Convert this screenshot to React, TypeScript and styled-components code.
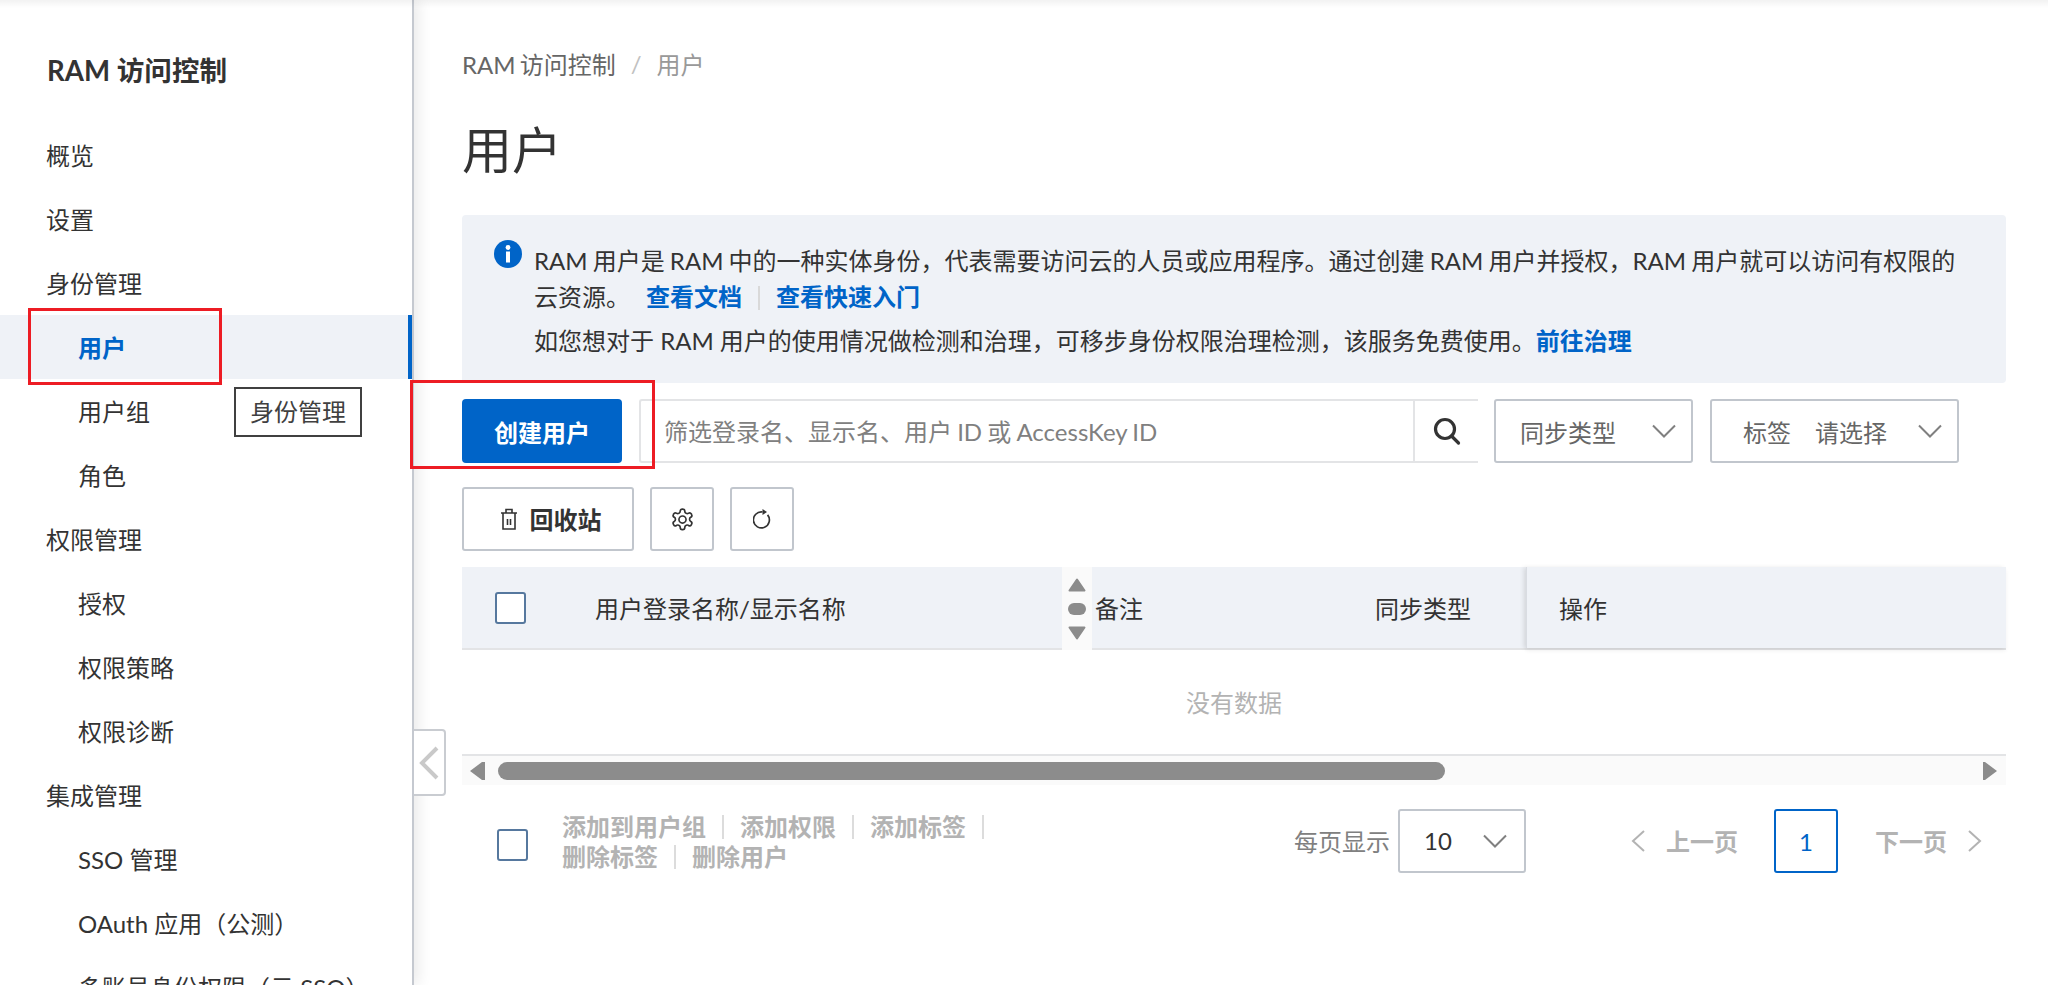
import React from "react";
import styled, { createGlobalStyle } from "styled-components";

const FONT = `Lato, "Noto Sans CJK SC", sans-serif`;

const Global = createGlobalStyle`
  html, body { margin: 0; padding: 0; height: 100%; overflow: hidden; background: #fff; }
  body { font-family: ${FONT}; color: #333; font-size: 24px; }
  #root { height: 100%; }
  * { box-sizing: border-box; }
`;

const Page = styled.div`
  position: relative;
  display: flex;
  width: 2048px;
  height: 985px;
  overflow: hidden;
  &::before {
    content: "";
    position: absolute;
    left: 0; right: 0; top: 0;
    height: 8px;
    background: linear-gradient(rgba(0,0,0,.05), rgba(0,0,0,0));
    z-index: 3;
  }
`;

const Sidebar = styled.aside`
  position: relative;
  z-index: 2;
  flex: 0 0 414px;
  height: 985px;
  background: #fff;
  border-right: 2px solid #c5c9d0;
  box-shadow: 4px 0 14px rgba(0,0,0,.09);
  padding-top: 50px;
  overflow: hidden;
`;

const SideTitle = styled.div`
  padding-left: 47px;
  height: 42px;
  line-height: 42px;
  font-size: 27.6px;
  font-weight: 700;
  color: #333;
  margin-bottom: 31px;
`;

const MenuItem = styled.div<{ $sub?: boolean; $active?: boolean }>`
  position: relative;
  height: 64px;
  line-height: 66px;
  padding-left: ${(p) => (p.$sub ? 78 : 46)}px;
  font-size: 24px;
  white-space: nowrap;
  color: ${(p) => (p.$active ? "#0064c8" : "#333")};
  font-weight: ${(p) => (p.$active ? 700 : 400)};
  background: ${(p) => (p.$active ? "#eff2f7" : "transparent")};
  border-right: ${(p) => (p.$active ? "4px solid #0064c8" : "none")};
`;

const CollapseTab = styled.div`
  position: absolute;
  left: 414px;
  top: 729px;
  width: 32px;
  height: 67px;
  background: #fff;
  border: 2px solid #c9ccd1;
  border-left: none;
  border-radius: 0 4px 4px 0;
  display: flex;
  align-items: center;
  justify-content: center;
  z-index: 3;
`;

const Main = styled.main`
  flex: 1;
  min-width: 0;
  padding: 48px 42px 0 48px;
`;

const Crumbs = styled.div`
  display: flex;
  align-items: center;
  height: 34px;
  margin-top: -2px;
  font-size: 24px;
  color: #666;
  word-spacing: -2px;
`;
const CrumbSep = styled.span`
  margin: 0 15px;
  color: #c1c1c1;
`;
const CrumbLast = styled.span`
  color: #999;
`;

const H1 = styled.h1`
  margin: 37px 0 0;
  height: 68px;
  line-height: 66px;
  font-size: 50px;
  font-weight: 400;
  color: #333;
`;

const Notice = styled.div`
  margin-top: 30px;
  height: 168px;
  background: #eff2f7;
  border-radius: 4px;
  padding: 28px 14px 0 32px;
  display: flex;
  gap: 12px;
`;
const InfoIcon = styled.svg`
  flex: 0 0 28px;
  width: 28px;
  height: 28px;
  margin-top: -3px;
`;
const NoticeBody = styled.div`
  flex: 1;
  min-width: 0;
  font-size: 24px;
  line-height: 36px;
  color: #333;
`;
const NoticeLine = styled.div<{ $gap?: number; $ws?: number }>`
  margin-top: ${(p) => p.$gap ?? 0}px;
  word-spacing: ${(p) => p.$ws ?? 0}px;
  white-space: nowrap;
`;
const InfoLink = styled.a<{ $ml?: number }>`
  margin-left: ${(p) => p.$ml ?? 0}px;
  color: #0064c8;
  font-weight: 700;
`;
const LinkDivider = styled.span`
  display: inline-block;
  width: 2px;
  height: 24px;
  background: #d9d9d9;
  margin: 0 16px;
  vertical-align: -4px;
`;

const Toolbar = styled.div`
  display: flex;
  margin-top: 16px;
  height: 64px;
`;
const PrimaryButton = styled.button`
  flex: 0 0 160px;
  height: 64px;
  border: none;
  border-radius: 4px;
  background: #0064c8;
  color: #fff;
  font: 700 24px ${FONT};
`;
const SearchBox = styled.div`
  margin-left: 17px;
  width: 839px;
  height: 64px;
  display: flex;
  border: 2px solid #e3e4e6;
  border-right: none;
  border-radius: 3px 0 0 3px;
`;
const SearchText = styled.div`
  flex: 1;
  padding-left: 23px;
  line-height: 62px;
  font-size: 24px;
  word-spacing: -1px;
  color: #808080;
  white-space: nowrap;
`;
const SearchBtn = styled.div`
  flex: 0 0 65px;
  border-left: 2px solid #e3e4e6;
  display: flex;
  align-items: center;
  justify-content: center;
`;
const SelectBox = styled.div<{ $w: number; $ml: number }>`
  margin-left: ${(p) => p.$ml}px;
  flex: 0 0 ${(p) => p.$w}px;
  height: 64px;
  border: 2px solid #c1c6cd;
  border-radius: 3px;
  display: flex;
  align-items: center;
  justify-content: space-between;
  color: #666;
  font-size: 24px;
  white-space: nowrap;
`;
const SelectLabel = styled.span<{ $pl: number }>`
  padding-left: ${(p) => p.$pl}px;
`;
const SelectLabelGap = styled.span`
  margin-left: 24px;
`;
const Chevron = styled.svg<{ $mr: number }>`
  margin-right: ${(p) => p.$mr}px;
  flex: none;
`;

const ActionRow = styled.div`
  display: flex;
  gap: 16px;
  margin-top: 24px;
  height: 64px;
`;
const GhostButton = styled.button<{ $w: number; $pl?: number }>`
  flex: 0 0 ${(p) => p.$w}px;
  height: 64px;
  padding: 0 0 0 ${(p) => p.$pl ?? 0}px;
  background: #fff;
  border: 2px solid #c1c6cd;
  border-radius: 3px;
  display: flex;
  align-items: center;
  justify-content: center;
  gap: 13px;
  color: #333;
  font: 700 24px ${FONT};
`;
const GhostText = styled.span`
  margin-top: -2px;
`;

const TableWrap = styled.div`
  margin-top: 16px;
`;
const HeadRow = styled.div`
  position: relative;
  display: flex;
  align-items: stretch;
  height: 83px;
  background: #eff2f7;
  border-bottom: 2px solid #e3e4e6;
  font-size: 24px;
  color: #333;
`;
const CheckCell = styled.div`
  flex: 0 0 133px;
  padding-left: 33px;
  display: flex;
  align-items: center;
`;
const CheckBox = styled.span`
  display: block;
  width: 31px;
  height: 32px;
  background: #fff;
  border: 2px solid #56789e;
  border-radius: 3px;
`;
const NameCell = styled.div`
  flex: 0 0 467px;
  line-height: 84px;
`;
const SortCell = styled.div`
  flex: 0 0 30px;
  margin-bottom: -2px;
  background: #fafafa;
  display: flex;
  flex-direction: column;
  align-items: center;
  justify-content: center;
  gap: 11px;
`;
const RemarkCell = styled.div`
  flex: 0 0 283px;
  padding-left: 3px;
  line-height: 84px;
`;
const SyncCell = styled.div`
  flex: 0 0 151px;
  line-height: 84px;
`;
const OpsCell = styled.div`
  flex: 1;
  padding-left: 32px;
  line-height: 84px;
  border-left: 1px solid #d9dce2;
  box-shadow: -3px 0 4px rgba(0,0,0,.08), 0 3px 4px rgba(0,0,0,.05);
`;
const Empty = styled.div`
  height: 104px;
  line-height: 106px;
  text-align: center;
  font-size: 24px;
  color: #b3b3b3;
`;
const ScrollBar = styled.div`
  height: 31px;
  background: #fafafa;
  border-top: 2px solid #e3e4e6;
  display: flex;
  align-items: center;
  padding: 0 9px 0 8px;
`;
const ScrollThumb = styled.div`
  margin-left: 13px;
  width: 947px;
  height: 18px;
  border-radius: 9px;
  background: #8c8c8c;
`;
const ScrollSpacer = styled.div`
  flex: 1;
`;

const Footer = styled.div`
  display: flex;
  align-items: center;
  margin-top: 24px;
  height: 63px;
`;
const FooterCheck = styled(CheckBox)`
  margin-left: 35px;
  width: 31px;
  margin-top: 8px;
`;
const BatchLinks = styled.div`
  margin-left: 34px;
  width: 460px;
  margin-top: 2px;
  font-size: 24px;
  font-weight: 700;
  color: #b3b3b3;
  line-height: 30px;
`;
const BatchLine = styled.div`
  display: flex;
  align-items: center;
  white-space: nowrap;
`;
const BatchDivider = styled.span`
  width: 2px;
  height: 24px;
  margin: 0 16px;
  background: #dcdcdc;
`;
const Pager = styled.div`
  margin-left: auto;
  display: flex;
  align-items: center;
  height: 63px;
  margin-right: 24px;
`;
const PerPage = styled.span`
  color: #808080;
  font-size: 24px;
  margin-right: 8px;
  white-space: nowrap;
`;
const PageNav = styled.span`
  display: flex;
  align-items: center;
  gap: 21px;
  color: #b3b3b3;
  font-size: 24px;
  font-weight: 700;
  white-space: nowrap;
`;
const PrevNav = styled(PageNav)`
  margin-left: 105px;
`;
const NextNav = styled(PageNav)`
  margin-left: 37px;
`;
const PageNum = styled.span`
  margin-left: 36px;
  width: 64px;
  height: 64px;
  line-height: 62px;
  text-align: center;
  border: 2px solid #0064c8;
  border-radius: 3px;
  color: #0064c8;
  font-size: 24px;
`;
const SelectValue = styled.span`
  padding-left: 24px;
  color: #333;
`;

const Annotation = styled.div<{ $x: number; $y: number; $w: number; $h: number }>`
  position: absolute;
  left: ${(p) => p.$x}px;
  top: ${(p) => p.$y}px;
  width: ${(p) => p.$w}px;
  height: ${(p) => p.$h}px;
  border: 3px solid #ed1c24;
  z-index: 5;
`;
const TagNote = styled.div`
  position: absolute;
  left: 234px;
  top: 387px;
  width: 128px;
  height: 50px;
  background: #fff;
  border: 2px solid #404040;
  font-size: 24px;
  line-height: 46px;
  padding-left: 14px;
  color: #404040;
  z-index: 5;
  white-space: nowrap;
`;

const ChevronDown = ({ mr, w = 24 }: { mr: number; w?: number }) => (
  <Chevron $mr={mr} width={w} height="14" viewBox="0 0 24 14" fill="none" stroke="#808080" strokeWidth="2">
    <path d="M1 1.5l11 11 11-11" />
  </Chevron>
);

const ThinChevron = ({ left }: { left?: boolean }) => (
  <svg width="14" height="22" viewBox="0 0 14 22" fill="none" stroke="#b3b3b3" strokeWidth="2">
    <path d={left ? "M13 1L2 11l11 10" : "M1 1l11 10L1 21"} />
  </svg>
);

const menu: { t: string; sub?: boolean; active?: boolean }[] = [
  { t: "概览" },
  { t: "设置" },
  { t: "身份管理" },
  { t: "用户", sub: true, active: true },
  { t: "用户组", sub: true },
  { t: "角色", sub: true },
  { t: "权限管理" },
  { t: "授权", sub: true },
  { t: "权限策略", sub: true },
  { t: "权限诊断", sub: true },
  { t: "集成管理" },
  { t: "SSO 管理", sub: true },
  { t: "OAuth 应用（公测）", sub: true },
  { t: "多账号身份权限（云 SSO）", sub: true },
];

export default function App() {
  return (
    <Page>
      <Global />
      <Sidebar>
        <SideTitle>RAM 访问控制</SideTitle>
        {menu.map((m) => (
          <MenuItem key={m.t} $sub={m.sub} $active={m.active}>
            {m.t}
          </MenuItem>
        ))}
      </Sidebar>
      <CollapseTab>
        <svg width="20" height="34" viewBox="0 0 20 34" fill="none" stroke="#c9c9c9" strokeWidth="4">
          <path d="M18 2L3 17l15 15" />
        </svg>
      </CollapseTab>
      <Main>
        <Crumbs>
          RAM 访问控制<CrumbSep>/</CrumbSep>
          <CrumbLast>用户</CrumbLast>
        </Crumbs>
        <H1>用户</H1>
        <Notice>
          <InfoIcon viewBox="0 0 28 28">
            <circle cx="14" cy="14" r="14" fill="#0064c8" />
            <circle cx="14" cy="7.5" r="2.4" fill="#fff" />
            <rect x="12" y="11.5" width="4" height="11" fill="#fff" />
          </InfoIcon>
          <NoticeBody>
            <NoticeLine $ws={-1}>
              RAM 用户是 RAM 中的一种实体身份，代表需要访问云的人员或应用程序。通过创建 RAM 用户并授权，RAM 用户就可以访问有权限的
            </NoticeLine>
            <NoticeLine>
              云资源。
              <InfoLink $ml={16}>查看文档</InfoLink>
              <LinkDivider />
              <InfoLink>查看快速入门</InfoLink>
            </NoticeLine>
            <NoticeLine $gap={8}>
              如您想对于 RAM 用户的使用情况做检测和治理，可移步身份权限治理检测，该服务免费使用。
              <InfoLink>前往治理</InfoLink>
            </NoticeLine>
          </NoticeBody>
        </Notice>
        <Toolbar>
          <PrimaryButton>创建用户</PrimaryButton>
          <SearchBox>
            <SearchText>筛选登录名、显示名、用户 ID 或 AccessKey ID</SearchText>
            <SearchBtn>
              <svg width="30" height="30" viewBox="0 0 30 30" fill="none" stroke="#333" strokeWidth="3.2">
                <circle cx="13" cy="13" r="9.5" />
                <path d="M19.5 20l7 7" strokeLinecap="round" />
              </svg>
            </SearchBtn>
          </SearchBox>
          <SelectBox $w={199} $ml={16}>
            <SelectLabel $pl={24}>同步类型</SelectLabel>
            <ChevronDown mr={15} />
          </SelectBox>
          <SelectBox $w={249} $ml={17}>
            <SelectLabel $pl={31}>
              标签<SelectLabelGap>请选择</SelectLabelGap>
            </SelectLabel>
            <ChevronDown mr={15} />
          </SelectBox>
        </Toolbar>
        <ActionRow>
          <GhostButton $w={172} $pl={6}>
            <svg width="16" height="22" viewBox="0 0 16 22" fill="none" stroke="#333" strokeWidth="1.6">
              <path d="M0 5h16M5 5V1.5h6V5M2 5v16h12V5M6.5 11v6M9.5 11v6" />
            </svg>
            <GhostText>回收站</GhostText>
          </GhostButton>
          <GhostButton $w={64}>
            <svg width="25" height="25" viewBox="0 0 24 24" fill="none" stroke="#333" strokeWidth="1.6" strokeLinejoin="round">
              <path d="M12.2 2h-.4a2 2 0 0 0-2 2v.2a2 2 0 0 1-1 1.7l-.4.2a2 2 0 0 1-2 0l-.2-.1a2 2 0 0 0-2.7.7l-.2.4a2 2 0 0 0 .7 2.7l.2.1a2 2 0 0 1 1 1.7v.5a2 2 0 0 1-1 1.7l-.2.1a2 2 0 0 0-.7 2.7l.2.4a2 2 0 0 0 2.7.7l.2-.1a2 2 0 0 1 2 0l.4.2a2 2 0 0 1 1 1.7v.2a2 2 0 0 0 2 2h.4a2 2 0 0 0 2-2v-.2a2 2 0 0 1 1-1.7l.4-.2a2 2 0 0 1 2 0l.2.1a2 2 0 0 0 2.7-.7l.2-.4a2 2 0 0 0-.7-2.7l-.2-.1a2 2 0 0 1-1-1.7v-.5a2 2 0 0 1 1-1.7l.2-.1a2 2 0 0 0 .7-2.7l-.2-.4a2 2 0 0 0-2.7-.7l-.2.1a2 2 0 0 1-2 0l-.4-.2a2 2 0 0 1-1-1.7V4a2 2 0 0 0-2-2z" />
              <circle cx="12" cy="12" r="3.4" />
            </svg>
          </GhostButton>
          <GhostButton $w={64}>
            <svg width="18" height="20" viewBox="0 0 18 20" fill="none" stroke="#333" strokeWidth="1.7">
              <path d="M14.6 5.9A8 8 0 1 1 9.5 3" />
              <path d="M9.5 0l4.5 3-4.5 3z" fill="#333" stroke="none" />
            </svg>
          </GhostButton>
        </ActionRow>
        <TableWrap>
          <HeadRow>
            <CheckCell>
              <CheckBox />
            </CheckCell>
            <NameCell>用户登录名称/显示名称</NameCell>
            <SortCell>
              <svg width="18" height="14" viewBox="0 0 18 14" fill="#8c8c8c" stroke="#8c8c8c" strokeWidth="2" strokeLinejoin="round">
                <path d="M9 1.5l7.5 11h-15z" />
              </svg>
              <svg width="18" height="12" viewBox="0 0 18 12" fill="#8c8c8c">
                <rect width="18" height="12" rx="6" />
              </svg>
              <svg width="18" height="14" viewBox="0 0 18 14" fill="#8c8c8c" stroke="#8c8c8c" strokeWidth="2" strokeLinejoin="round">
                <path d="M9 12.5l7.5-11h-15z" />
              </svg>
            </SortCell>
            <RemarkCell>备注</RemarkCell>
            <SyncCell>同步类型</SyncCell>
            <OpsCell>操作</OpsCell>
          </HeadRow>
          <Empty>没有数据</Empty>
          <ScrollBar>
            <svg width="15" height="18" viewBox="0 0 15 18" fill="#8c8c8c">
              <path d="M15 0v18h-3L0 9l12-9z" />
            </svg>
            <ScrollThumb />
            <ScrollSpacer />
            <svg width="14" height="18" viewBox="0 0 14 18" fill="#8c8c8c">
              <path d="M0 0v18h2L14 9 2 0z" />
            </svg>
          </ScrollBar>
        </TableWrap>
        <Footer>
          <FooterCheck />
          <BatchLinks>
            <BatchLine>
              添加到用户组<BatchDivider />添加权限<BatchDivider />添加标签<BatchDivider />
            </BatchLine>
            <BatchLine>
              删除标签<BatchDivider />删除用户
            </BatchLine>
          </BatchLinks>
          <Pager>
            <PerPage>每页显示</PerPage>
            <SelectBox $w={128} $ml={0}>
              <SelectValue>10</SelectValue>
              <ChevronDown mr={17} />
            </SelectBox>
            <PrevNav>
              <ThinChevron left />
              上一页
            </PrevNav>
            <PageNum>1</PageNum>
            <NextNav>
              下一页
              <ThinChevron />
            </NextNav>
          </Pager>
        </Footer>
      </Main>
      <Annotation $x={28} $y={308} $w={194} $h={77} />
      <Annotation $x={410} $y={380} $w={245} $h={89} />
      <TagNote>身份管理</TagNote>
    </Page>
  );
}
